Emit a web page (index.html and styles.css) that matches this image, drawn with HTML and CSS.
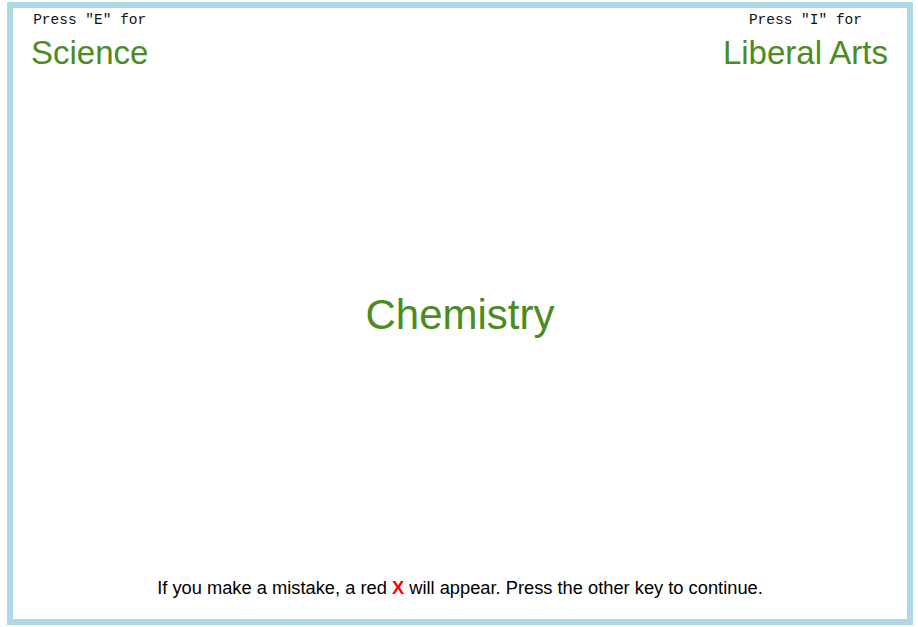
FILE: index.html
```html
<!DOCTYPE html>
<html>
<head>
<meta charset="utf-8">
<link rel="stylesheet" href="styles.css">
</head>
<body>
<div class="frame">
  <div class="header">
    <div class="category">
      <div class="key">Press "E" for</div>
      <div class="label">Science</div>
    </div>
    <div class="category">
      <div class="key">Press "I" for</div>
      <div class="label">Liberal Arts</div>
    </div>
  </div>
  <div class="stage">
    <div class="stimulus">Chemistry</div>
  </div>
  <div class="footer">If you make a mistake, a red <span class="x">X</span> will appear. Press the other key to continue.</div>
</div>
</body>
</html>
```
FILE: styles.css
```css
html, body {
  margin: 0;
  padding: 0;
  background: #ffffff;
}
body {
  font-family: "Liberation Sans", Arial, sans-serif;
}
.frame {
  box-sizing: border-box;
  width: 906px;
  height: 623px;
  margin: 2px 5px 2px 7px;
  border: 6px solid #add8e6;
  display: flex;
  flex-direction: column;
}
.header {
  display: flex;
  justify-content: space-between;
  padding: 4px 19px 0 18px;
}
.category {
  display: flex;
  flex-direction: column;
  align-items: center;
}
.key {
  font-family: "Liberation Mono", "Courier New", monospace;
  font-size: 14.5px;
  line-height: 17px;
  color: #111;
  white-space: pre;
}
.label {
  margin-top: 5px;
  font-size: 33px;
  line-height: 38px;
  color: #4b8c1e;
}
.stage {
  flex: 1;
  display: flex;
  align-items: center;
  justify-content: center;
  padding-bottom: 19px;
}
.stimulus {
  font-size: 42px;
  line-height: 48px;
  color: #4b8c1e;
}
.footer {
  text-align: center;
  font-size: 18.3px;
  line-height: 21px;
  color: #000;
  padding-bottom: 21px;
}
.x {
  color: #ff0000;
  font-weight: bold;
}
```
